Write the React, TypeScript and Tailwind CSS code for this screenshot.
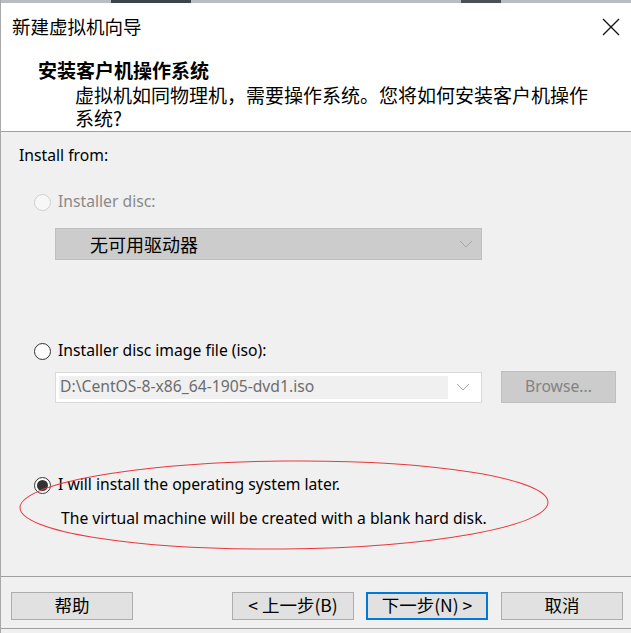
import { FC } from "react";

const cn = { fontFamily: '"Noto Sans CJK SC", "Noto Sans", sans-serif' };
const en = { fontFamily: '"Noto Sans", "Noto Sans CJK SC", sans-serif' };

const Radio: FC<{ state: "disabled" | "off" | "on" }> = ({ state }) => {
  if (state === "disabled")
    return <span className="w-[17px] h-[17px] rounded-full border border-[#cfcfcf] bg-[#f7f7f7] shrink-0" />;
  return (
    <span className="w-[17px] h-[17px] rounded-full border border-[#333] bg-white shrink-0 flex items-center justify-center">
      {state === "on" && <span className="w-[11px] h-[11px] rounded-full bg-[#333]" />}
    </span>
  );
};

const Chevron: FC<{ color: string }> = ({ color }) => (
  <svg width="14" height="8" viewBox="0 0 14 8" fill="none" stroke={color} strokeWidth="1">
    <path d="M1 1 L7 7 L13 1" />
  </svg>
);

const Btn: FC<{ label: string; primary?: boolean }> = ({ label, primary }) => (
  <div
    className={
      "w-[122px] h-[28px] flex items-center justify-center bg-[#e1e1e1] text-[17.5px] text-black " +
      (primary ? "border-2 border-[#0078d7]" : "border border-[#adadad]")
    }
    style={cn}
  >
    {label}
  </div>
);

export default function App() {
  return (
    <div className="relative w-[631px] h-[633px] overflow-hidden bg-[#f0f0f0] border-l border-[#a8a8a8]">
      {/* strip of the window behind */}
      <div className="h-[3px] flex">
        <div className="w-[110px] bg-[#b9bcc0]" />
        <div className="w-[80px] bg-[#3d434b]" />
        <div className="w-[270px] bg-[#b9bcc0]" />
        <div className="w-[40px] bg-[#4b5058]" />
        <div className="flex-1 bg-[#b9bcc0]" />
      </div>

      {/* header */}
      <div className="bg-white h-[129px] border-b border-[#a0a0a0]">
        <div className="h-[47px] flex items-center justify-between pl-[11px] pr-[10px]">
          <span className="text-[18.5px] text-black" style={cn}>新建虚拟机向导</span>
          <svg width="20" height="20" viewBox="0 0 20 20" stroke="#111" strokeWidth="1.3">
            <path d="M2 2 L18 18 M18 2 L2 18" />
          </svg>
        </div>
        <div className="pl-[37px] pt-[7px] text-[19px] font-bold leading-[26px] text-black" style={cn}>
          安装客户机操作系统
        </div>
        <div className="pl-[74px] pr-[37px] text-[19px] leading-[23px] text-black" style={cn}>
          虚拟机如同物理机，需要操作系统。您将如何安装客户机操作系统?
        </div>
      </div>

      {/* body */}
      <div className="h-[445px] border-b border-[#a0a0a0] flex flex-col">
        <div className="pl-[18px] pt-[13px] text-[15.7px] leading-[20px] text-black" style={en}>Install from:</div>

        <div className="pl-[33px] mt-[27px] flex items-center gap-[7px] h-[20px]">
          <Radio state="disabled" />
          <span className="text-[15.7px] text-[#8a8a8a]" style={en}>Installer disc:</span>
        </div>
        <div className="ml-[54px] mt-[16px] w-[427px] h-[32px] bg-[#cccccc] border border-[#bfbfbf] flex items-center justify-between pl-[34px] pr-[8px]">
          <span className="text-[18px] text-black" style={cn}>无可用驱动器</span>
          <Chevron color="#a6a6a6" />
        </div>

        <div className="pl-[33px] mt-[81px] flex items-center gap-[7px] h-[20px]">
          <Radio state="off" />
          <span className="text-[15.7px] text-black" style={en}>Installer disc image file (iso):</span>
        </div>
        <div className="ml-[54px] mt-[10px] flex items-center gap-[19px]">
          <div className="w-[427px] h-[31px] bg-white border border-[#d9d9d9] flex items-center p-[3px]">
            <div className="flex-1 h-full bg-[#f0f0f0] flex items-center pl-[1px]">
              <span className="text-[15.7px] text-[#6d6d6d]" style={en}>D:\CentOS-8-x86_64-1905-dvd1.iso</span>
            </div>
            <div className="w-[30px] flex justify-center">
              <Chevron color="#a6a6a6" />
            </div>
          </div>
          <div className="w-[115px] h-[32px] bg-[#cccccc] border border-[#bfbfbf] flex items-center justify-center">
            <span className="text-[15.7px] text-[#838383]" style={en}>Browse...</span>
          </div>
        </div>

        <div className="pl-[33px] mt-[72px] flex items-center gap-[7px] h-[20px]">
          <Radio state="on" />
          <span className="text-[15.7px] text-black" style={en}>I will install the operating system later.</span>
        </div>
        <div className="pl-[60px] mt-[13px] text-[15.7px] leading-[20px] text-black" style={en}>
          The virtual machine will be created with a blank hard disk.
        </div>
      </div>

      {/* footer */}
      <div className="h-[52px] border-b border-[#a0a0a0] flex items-center pl-[10px] pr-[8px] pt-[6px]">
        <Btn label="帮助" />
        <div className="flex-1" />
        <div className="flex gap-[12px] mr-[13px]">
          <Btn label="< 上一步(B)" />
          <Btn label="下一步(N) >" primary />
        </div>
        <Btn label="取消" />
      </div>

      {/* red annotation ellipse */}
      <svg className="absolute left-0 top-0 pointer-events-none" width="631" height="633">
        <ellipse cx="283" cy="505" rx="264" ry="44" fill="none" stroke="#e8383d" strokeWidth="1" transform="rotate(-0.6 283 505)" />
      </svg>
    </div>
  );
}
